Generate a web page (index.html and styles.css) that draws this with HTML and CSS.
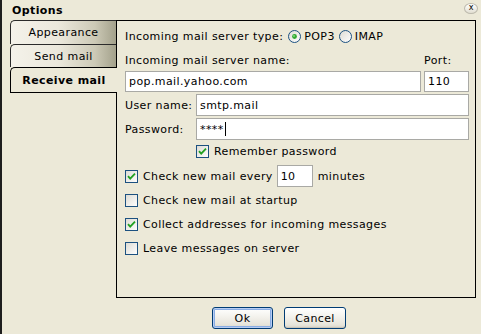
FILE: index.html
```html
<!DOCTYPE html>
<html>
<head>
<meta charset="utf-8">
<link rel="stylesheet" href="styles.css">
</head>
<body>
<div class="dialog">
  <div class="titlebar">
    <span class="title">Options</span>
    <span class="close">x</span>
  </div>
  <div class="main">
    <div class="tabs">
      <div class="tab t1">Appearance</div>
      <div class="tab t2">Send mail</div>
      <div class="tab active">Receive mail</div>
    </div>
    <div class="panel">
      <div class="row r-type">
        <span>Incoming mail server type:</span>
        <span class="radio on"><svg width="13" height="13" viewBox="0 0 13 13"><defs><linearGradient id="rg" x1="0" y1="0" x2="1" y2="1"><stop offset="0" stop-color="#DCDBD3"/><stop offset="1" stop-color="#FFFFFF"/></linearGradient></defs><circle cx="6.5" cy="6.5" r="6" fill="url(#rg)" stroke="#1C5180"/><circle cx="6.5" cy="6.5" r="2.4" fill="#2FA92F"/><circle cx="6" cy="6" r="1" fill="#7ED77E"/></svg></span>
        <span class="rlabel">POP3</span>
        <span class="radio"><svg width="13" height="13" viewBox="0 0 13 13"><circle cx="6.5" cy="6.5" r="6" fill="url(#rg)" stroke="#1C5180"/></svg></span>
        <span class="rlabel">IMAP</span>
      </div>
      <div class="row r-names">
        <span class="grow">Incoming mail server name:</span>
        <span class="portlabel">Port:</span>
      </div>
      <div class="row r-server">
        <div class="field grow">pop.mail.yahoo.com</div>
        <div class="field port">110</div>
      </div>
      <div class="row r-user">
        <span class="lbl">User name:</span>
        <div class="field grow">smtp.mail</div>
      </div>
      <div class="row r-pass">
        <span class="lbl">Password:</span>
        <div class="field grow">****<span class="caret"></span></div>
      </div>
      <div class="row r-remember">
        <span class="check on"><svg width="13" height="13" viewBox="0 0 13 13"><defs><linearGradient id="cg" x1="0" y1="0" x2="1" y2="1"><stop offset="0" stop-color="#DCDBD3"/><stop offset="1" stop-color="#FFFFFF"/></linearGradient></defs><rect x="0.5" y="0.5" width="12" height="12" fill="url(#cg)" stroke="#1C5180"/><path d="M3 6.2 L5.2 8.6 L10 3.6" fill="none" stroke="#21A121" stroke-width="1.8"/></svg></span>
        <span>Remember password</span>
      </div>
      <div class="row opt">
        <span class="check on"><svg width="13" height="13" viewBox="0 0 13 13"><rect x="0.5" y="0.5" width="12" height="12" fill="url(#cg)" stroke="#1C5180"/><path d="M3 6.2 L5.2 8.6 L10 3.6" fill="none" stroke="#21A121" stroke-width="1.8"/></svg></span>
        <span>Check new mail every</span>
        <div class="field mins">10</div>
        <span>minutes</span>
      </div>
      <div class="row opt">
        <span class="check"><svg width="13" height="13" viewBox="0 0 13 13"><rect x="0.5" y="0.5" width="12" height="12" fill="url(#cg)" stroke="#1C5180"/></svg></span>
        <span>Check new mail at startup</span>
      </div>
      <div class="row opt">
        <span class="check on"><svg width="13" height="13" viewBox="0 0 13 13"><rect x="0.5" y="0.5" width="12" height="12" fill="url(#cg)" stroke="#1C5180"/><path d="M3 6.2 L5.2 8.6 L10 3.6" fill="none" stroke="#21A121" stroke-width="1.8"/></svg></span>
        <span>Collect addresses for incoming messages</span>
      </div>
      <div class="row opt">
        <span class="check"><svg width="13" height="13" viewBox="0 0 13 13"><rect x="0.5" y="0.5" width="12" height="12" fill="url(#cg)" stroke="#1C5180"/></svg></span>
        <span>Leave messages on server</span>
      </div>
    </div>
  </div>
  <div class="buttons">
    <button class="btn default">Ok</button>
    <button class="btn">Cancel</button>
  </div>
</div>
</body>
</html>
```
FILE: styles.css
```css
html, body {
  margin: 0;
  padding: 0;
}
body {
  background: #ECE9D8;
  font-family: "DejaVu Sans", sans-serif;
  font-size: 11px;
  letter-spacing: 0.4px;
  color: #000;
}
.dialog {
  width: 481px;
  height: 334px;
  box-sizing: border-box;
  border-left: 2px solid #1e1e1e;
  display: flex;
  flex-direction: column;
}
.titlebar {
  height: 20px;
  display: flex;
  align-items: center;
  justify-content: space-between;
  padding: 0 3px 0 10px;
}
.title {
  font-weight: bold;
}
.close {
  width: 12px;
  height: 9px;
  border: 1px solid #BDBAAD;
  border-radius: 50%;
  background: linear-gradient(#FFFFFF, #E2DFD2);
  font-size: 8px;
  line-height: 8px;
  letter-spacing: 0;
  text-align: center;
  margin-top: -4px;
}
.main {
  display: flex;
  padding-left: 8px;
  height: 278px;
}
.tabs {
  width: 106px;
  display: flex;
  flex-direction: column;
  position: relative;
  z-index: 1;
}
.tab {
  box-sizing: border-box;
  border: 1px solid #2b2b2b;
  border-right: none;
  border-bottom: none;
  border-top-left-radius: 5px;
  display: flex;
  align-items: center;
  justify-content: center;
  background: linear-gradient(to right, #F4F2EA 0%, #EBE8DC 45%, #CCC9B6 80%, #A3A18B 100%);
}
.t1 {
  height: 24px;
}
.t2 {
  height: 23px;
}
.tab.active {
  height: 26px;
  border-color: #000;
  border-bottom: 1px solid #000;
  background: #ECE9D8;
  margin-right: -1px;
  font-weight: bold;
}
.panel {
  width: 360px;
  height: 278px;
  box-sizing: border-box;
  border: 1px solid #000;
  padding: 5px 6px 0 8px;
  display: flex;
  flex-direction: column;
}
.row {
  display: flex;
  align-items: center;
  white-space: nowrap;
}
.grow {
  flex: 1;
}
.r-type {
  height: 21px;
}
.radio {
  display: flex;
  margin-left: 5px;
  margin-right: 3px;
}
.rlabel + .radio {
  margin-left: 4px;
}
.r-names {
  height: 20px;
  margin-top: 3px;
}
.portlabel {
  width: 45px;
}
.r-server {
  height: 21px;
  margin-top: 1px;
}
.field {
  box-sizing: border-box;
  height: 100%;
  background: #fff;
  border: 1px solid #A9A9A5;
  padding-left: 3px;
  display: flex;
  align-items: center;
}
.port {
  width: 45px;
  margin-left: 3px;
}
.r-user {
  height: 22px;
  margin-top: 2px;
}
.r-pass {
  height: 22px;
  margin-top: 2px;
}
.lbl {
  width: 71px;
}
.caret {
  display: inline-block;
  width: 1px;
  height: 14px;
  background: #000;
  margin-left: 1px;
}
.r-remember {
  height: 18px;
  margin-top: 2px;
  padding-left: 71px;
}
.check {
  display: flex;
  margin-right: 5px;
}
.opt {
  height: 24px;
}
.r-remember + .opt {
  margin-top: 4px;
}
.mins {
  width: 36px;
  height: 22px;
  margin: 0 5px 0 4px;
}
.buttons {
  display: flex;
  padding: 9px 0 0 210px;
  gap: 11px;
}
.btn {
  font-family: "DejaVu Sans", sans-serif;
  font-size: 11px;
  letter-spacing: 0.4px;
  color: #000;
  width: 61px;
  height: 22px;
  border: 1px solid #003C74;
  border-radius: 3px;
  background: linear-gradient(#FFFFFF 0%, #F4F3EE 40%, #E6E4DA 85%, #D6D0C5 100%);
  box-shadow: inset 0 -1px 0 #C9C5B8, inset 0 1px 0 #fff;
  padding: 0;
}
.btn + .btn {
  width: 62px;
}
.btn.default {
  box-shadow: inset 0 0 0 1px #B7CDF3, inset 0 0 0 2px #89ADE4;
}
```
